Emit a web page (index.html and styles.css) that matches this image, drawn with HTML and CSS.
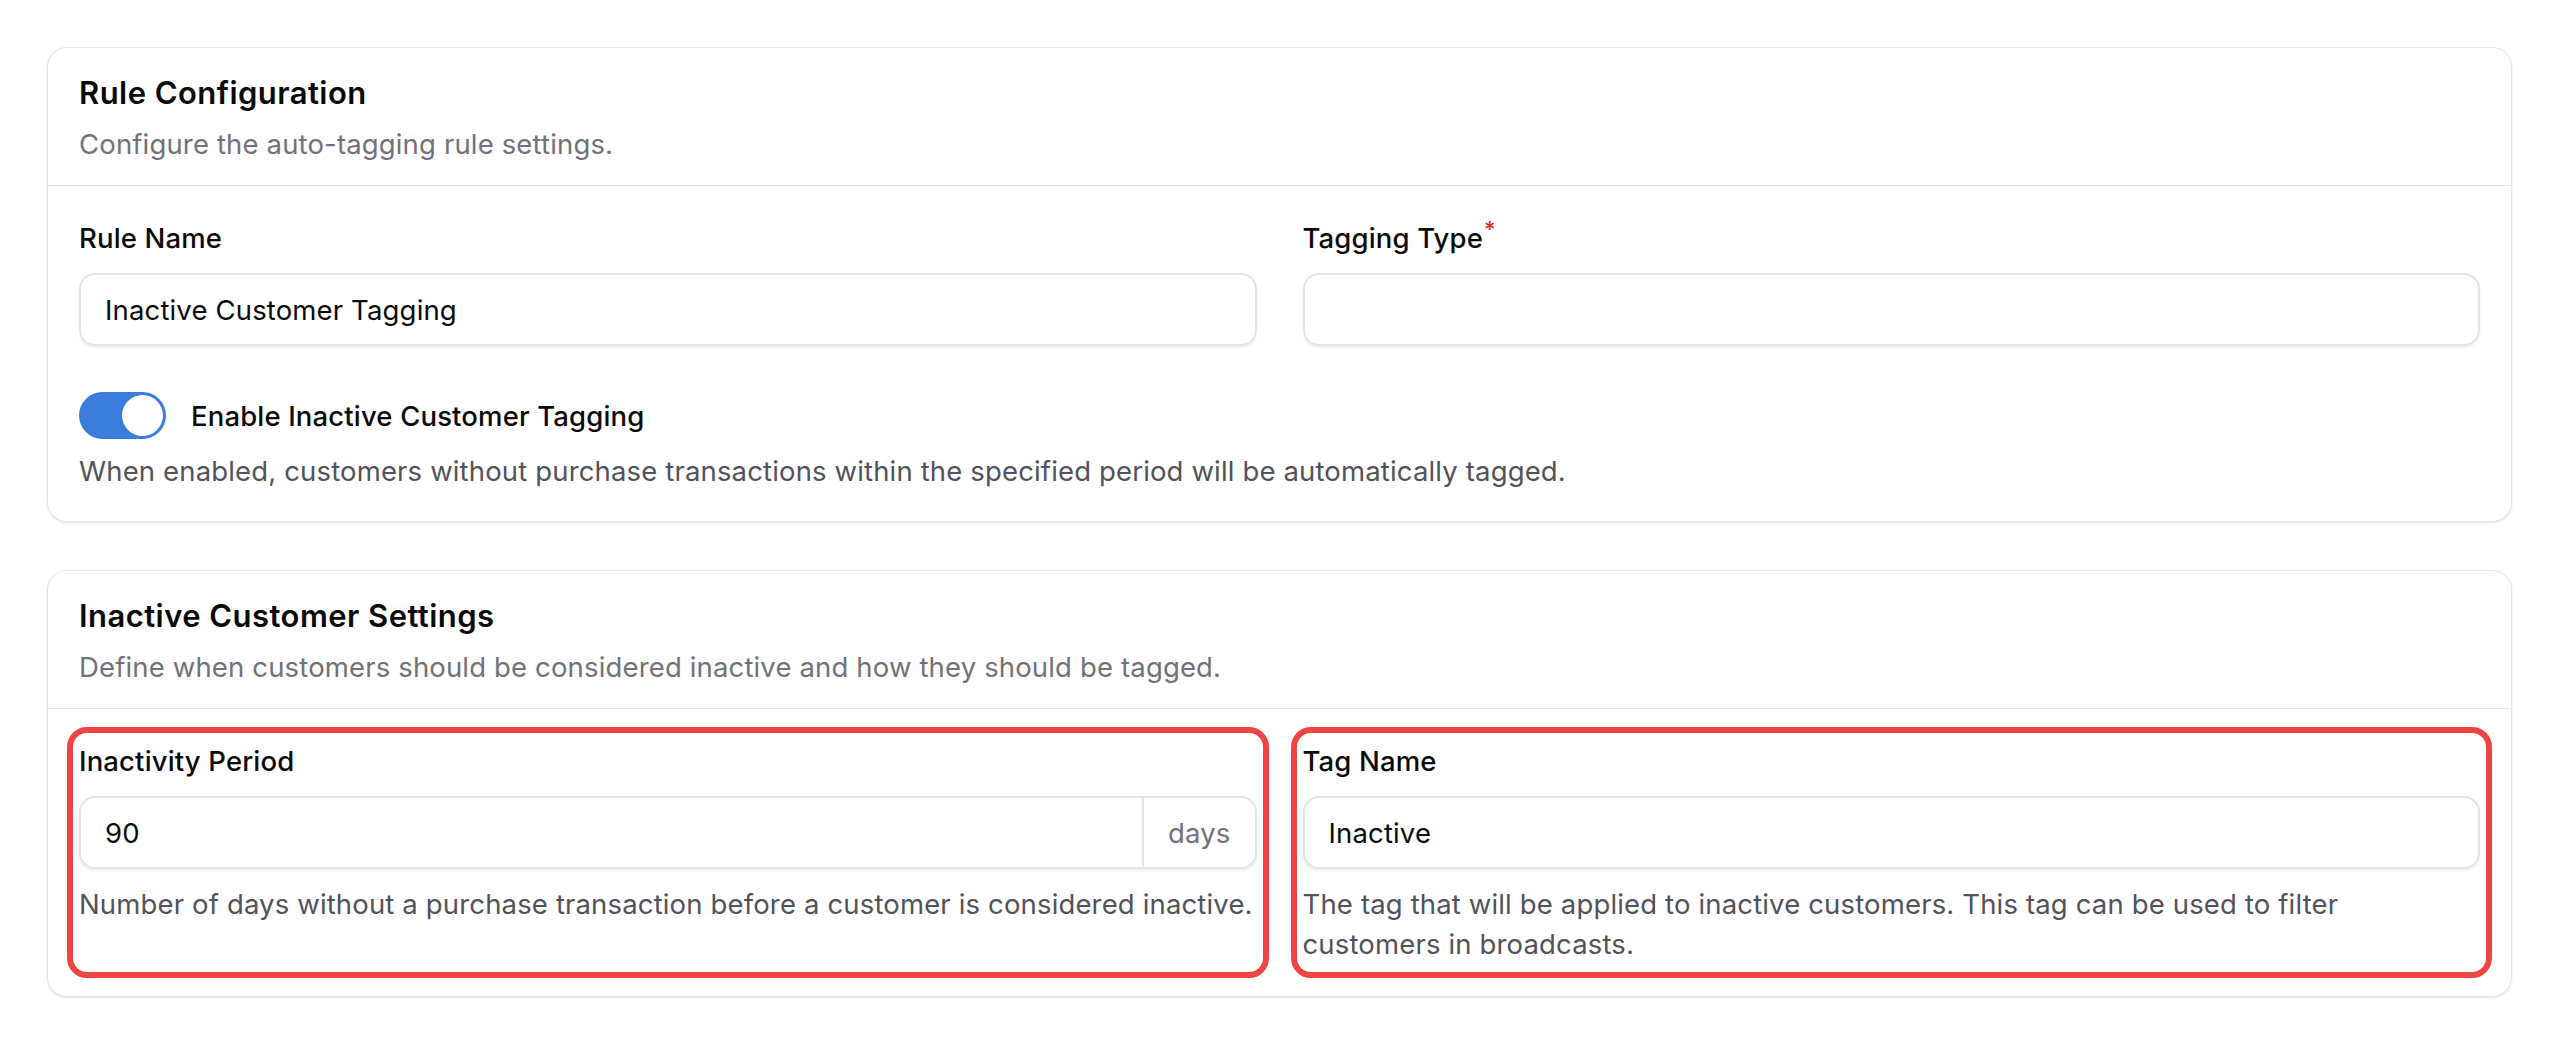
FILE: index.html
```html
<!DOCTYPE html>
<html lang="en">
<head>
<meta charset="utf-8">
<title>Inactive Customer Tagging</title>
<link rel="stylesheet" href="styles.css">
</head>
<body>
<main class="page">
  <section class="card">
    <header class="card-header">
      <h2 class="card-title">Rule Configuration</h2>
      <p class="card-desc">Configure the auto-tagging rule settings.</p>
    </header>
    <div class="card-body">
      <div class="grid">
        <div class="field">
          <label class="label">Rule Name</label>
          <div class="input"><span class="value">Inactive Customer Tagging</span></div>
        </div>
        <div class="field">
          <label class="label">Tagging Type<span class="req">*</span></label>
          <div class="input"></div>
        </div>
      </div>
      <div class="switch-row">
        <span class="switch"><span class="knob"></span></span>
        <span class="switch-label">Enable Inactive Customer Tagging</span>
      </div>
      <p class="help help-switch">When enabled, customers without purchase transactions within the specified period will be automatically tagged.</p>
    </div>
  </section>

  <section class="card">
    <header class="card-header">
      <h2 class="card-title">Inactive Customer Settings</h2>
      <p class="card-desc">Define when customers should be considered inactive and how they should be tagged.</p>
    </header>
    <div class="card-body">
      <div class="grid">
        <div class="field highlight">
          <label class="label">Inactivity Period</label>
          <div class="input input-group">
            <span class="value">90</span>
            <span class="addon">days</span>
          </div>
          <p class="help">Number of days without a purchase transaction before a customer is considered inactive.</p>
        </div>
        <div class="field highlight">
          <label class="label">Tag Name</label>
          <div class="input"><span class="value">Inactive</span></div>
          <p class="help">The tag that will be applied to inactive customers. This tag can be used to filter customers in broadcasts.</p>
        </div>
      </div>
    </div>
  </section>
</main>
</body>
</html>
```

FILE: styles.css
```css
* { box-sizing: border-box; }

html, body {
  margin: 0;
  background: #ffffff;
}

body {
  font-family: Inter, "Noto Sans", "Liberation Sans", sans-serif;
  color: #0a0a0a;
}

.page {
  padding: 47px 48px 48px 47px;
  display: flex;
  flex-direction: column;
  gap: 48px;
}

.card {
  background: #fff;
  border: 1px solid #e4e4e7;
  border-radius: 20px;
  box-shadow: 0 1px 3px rgba(0, 0, 0, 0.08), 0 1px 2px rgba(0, 0, 0, 0.04);
}

.card-header {
  padding: 22px 31px 21px;
  border-bottom: 1px solid #e4e4e7;
}

.card-title {
  margin: 0;
  font-size: 31px;
  line-height: 46px;
  font-weight: 600;
  letter-spacing: 0.45px;
  color: #0a0a0a;
}

.card-desc {
  margin: 8px 0 0;
  font-size: 27.5px;
  line-height: 40px;
  letter-spacing: 0.15px;
  color: #71717a;
}

.card-body {
  padding: 30px 31px 30px;
}

.grid {
  display: grid;
  grid-template-columns: 1fr 1fr;
  column-gap: 46px;
}

.field {
  padding: 2px 0;
  display: flex;
  flex-direction: column;
}

.field.highlight {
  outline: 6px solid #ef4444;
  outline-offset: 6px;
  border-radius: 8px;
}

.label {
  font-size: 27.5px;
  line-height: 40px;
  font-weight: 500;
  letter-spacing: 0.15px;
  color: #0a0a0a;
}

.req {
  color: #ef2222;
  font-size: 22px;
  line-height: 1;
  vertical-align: top;
  position: relative;
  top: 0;
  margin-left: 1px;
}

.input {
  margin-top: 15px;
  height: 73px;
  border: 2px solid #e4e4e7;
  border-radius: 16px;
  background: #fff;
  box-shadow: 0 2px 3px rgba(0, 0, 0, 0.07);
  display: flex;
  align-items: center;
  padding-left: 24px;
  font-size: 27.5px;
  letter-spacing: 0.15px;
  color: #0a0a0a;
  overflow: hidden;
}

.input-group {
  padding-right: 0;
}

.input-group .value {
  flex: 1;
}

.addon {
  align-self: stretch;
  display: flex;
  align-items: center;
  padding: 0 24px;
  border-left: 2px solid #e4e4e7;
  color: #71717a;
}

.help {
  margin: 15px 0 0;
  font-size: 27.5px;
  line-height: 40px;
  letter-spacing: 0.15px;
  color: #52525b;
}

.switch-row {
  margin-top: 44px;
  display: flex;
  align-items: center;
  gap: 25px;
}

.switch {
  width: 87px;
  height: 47px;
  border-radius: 24px;
  background: #3b7ddd;
  position: relative;
  flex: none;
}

.knob {
  position: absolute;
  top: 3px;
  right: 3px;
  width: 41px;
  height: 41px;
  border-radius: 50%;
  background: #fff;
}

.switch-label {
  font-size: 27.5px;
  line-height: 40px;
  font-weight: 500;
  letter-spacing: 0.15px;
  color: #0a0a0a;
}

.help-switch {
  margin-top: 12px;
}
```
